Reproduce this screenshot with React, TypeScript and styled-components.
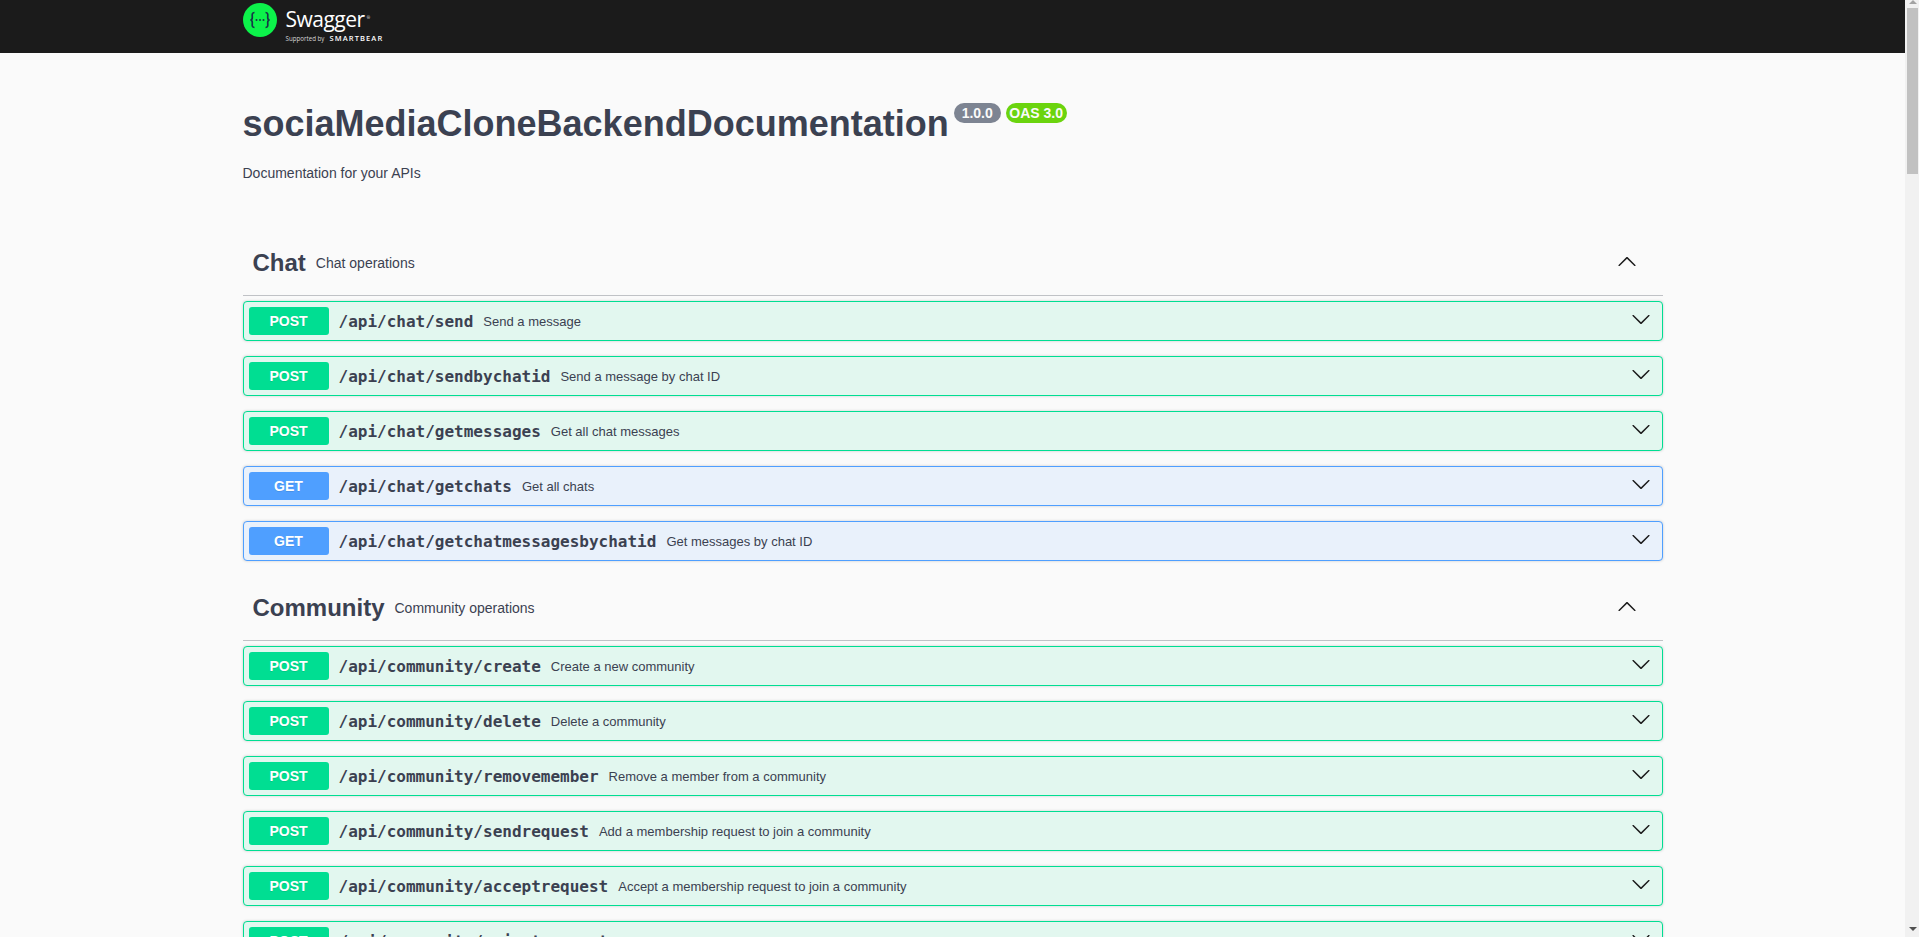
import React from "react";
import styled, { createGlobalStyle } from "styled-components";

const GlobalStyle = createGlobalStyle`
  body {
    margin: 0;
    background: #fafafa;
    font-family: "Liberation Sans", Arial, sans-serif;
    color: #3b4151;
  }
`;

const Shell = styled.div`
  display: flex;
  height: 100vh;
  overflow: hidden;
`;

const Page = styled.div`
  flex: 1;
  min-width: 0;
`;

const ScrollTrack = styled.div`
  flex: none;
  display: flex;
  flex-direction: column;
  width: 14px;
  background: #f1f1f1;
  padding: 0 1px 0 2px;
  box-sizing: border-box;
`;

const ScrollUp = styled.div`
  width: 0;
  height: 0;
  margin: 0 auto 4px;
  border-left: 4px solid transparent;
  border-right: 4px solid transparent;
  border-bottom: 4px solid #a3a3a3;
`;

const ScrollDown = styled.div`
  width: 0;
  height: 0;
  margin: auto auto 6px;
  border-left: 4px solid transparent;
  border-right: 4px solid transparent;
  border-top: 4px solid #505050;
`;

const ScrollThumb = styled.div`
  height: 166px;
  background: #c1c1c1;
`;

const Topbar = styled.div`
  background: #1b1b1b;
  height: 53px;
`;

const Wrapper = styled.div`
  box-sizing: border-box;
  max-width: 1460px;
  margin: 0 auto;
  padding: 0 20px;
`;

const LogoLink = styled.a`
  display: flex;
  align-items: flex-start;
  gap: 9px;
  padding-top: 3px;
  color: #fff;
`;

const LogoText = styled.div`
  display: flex;
  flex-direction: column;
  font-family: "Open Sans", sans-serif;
`;

const LogoName = styled.span`
  font-size: 21px;
  font-weight: 400;
  line-height: 26px;
  margin-top: 3px;
  letter-spacing: -0.5px;
  color: #fff;
`;

const LogoMark = styled.sup`
  font-size: 4px;
  line-height: 4px;
  margin-left: 2px;
`;

const LogoSub = styled.span`
  font-size: 6.200px;
  line-height: 9px;
  margin-top: 2px;
  color: #d8d8d8;
`;

const BearName = styled.b`
  font-size: 7.500px;
  font-weight: 600;
  letter-spacing: 1.100px;
  margin-left: 5px;
  color: #fff;
`;

const Info = styled.div`
  margin: 50px 0 56px;
`;

const TitleRow = styled.div`
  display: flex;
  align-items: flex-start;
`;

const Title = styled.h2`
  margin: 0;
  font-size: 36px;
  line-height: 42px;
  font-weight: 700;
  color: #3b4151;
`;

const Badge = styled.span<{ $bg: string; $pad: number }>`
  background: ${(p) => p.$bg};
  color: #fafafa;
  font-size: 14px;
  font-weight: 700;
  line-height: 16px;
  padding: 2px ${(p) => p.$pad}px;
  border-radius: 57px;
  margin-left: 5px;
`;

const Description = styled.p`
  margin: 20px 0 0;
  font-size: 14px;
  line-height: 17px;
  color: #3b4151;
`;

const Section = styled.section`
  margin-bottom: 22px;
`;

const TagHeader = styled.h3`
  display: flex;
  align-items: center;
  margin: 0 0 5px;
  padding: 10px 26px 17px 10px;
  height: 58px;
  box-sizing: border-box;
  border-bottom: 1px solid rgba(59, 65, 81, 0.3);
  font-size: 24px;
  font-weight: 700;
  color: #3b4151;
`;

const TagNote = styled.small`
  flex: 1;
  padding: 0 10px;
  font-size: 14px;
  font-weight: 400;
`;

const Opblock = styled.div<{ $get: boolean }>`
  display: flex;
  align-items: center;
  padding: 5px;
  margin: 0 0 15px;
  height: 40px;
  box-sizing: border-box;
  border: 1px solid ${(p) => (p.$get ? "#4f9fff" : "#00de92")};
  border-radius: 4px;
  background: ${(p) => (p.$get ? "#e9f1fb" : "#e2f7ef")};
  box-shadow: 0 0 3px rgba(0, 0, 0, 0.19);
`;

const Method = styled.span<{ $get: boolean }>`
  width: 80px;
  padding: 6px 0;
  border-radius: 3px;
  background: ${(p) => (p.$get ? "#4f9fff" : "#00de92")};
  color: #fff;
  font-size: 14px;
  line-height: 16px;
  font-weight: 700;
  text-align: center;
  text-shadow: 0 1px 0 rgba(0, 0, 0, 0.1);
`;

const Path = styled.span`
  padding: 0 10px;
  font-family: "DejaVu Sans Mono", monospace;
  font-size: 16px;
  font-weight: 700;
  color: #3b4151;
`;

const Summary = styled.span`
  flex: 1;
  font-size: 13px;
  color: #3b4151;
`;

const Arrow = styled.svg`
  width: 20px;
  height: 20px;
  margin: 0 6px 4px 0;
  fill: #1b1b1b;
`;

const TagArrow = styled(Arrow)`
  margin: 0 0 4px;
`;

type Op = { method: "POST" | "GET"; path: string; summary: string };

const sections: { name: string; note: string; ops: Op[] }[] = [
  {
    name: "Chat",
    note: "Chat operations",
    ops: [
      { method: "POST", path: "/api/chat/send", summary: "Send a message" },
      { method: "POST", path: "/api/chat/sendbychatid", summary: "Send a message by chat ID" },
      { method: "POST", path: "/api/chat/getmessages", summary: "Get all chat messages" },
      { method: "GET", path: "/api/chat/getchats", summary: "Get all chats" },
      { method: "GET", path: "/api/chat/getchatmessagesbychatid", summary: "Get messages by chat ID" },
    ],
  },
  {
    name: "Community",
    note: "Community operations",
    ops: [
      { method: "POST", path: "/api/community/create", summary: "Create a new community" },
      { method: "POST", path: "/api/community/delete", summary: "Delete a community" },
      { method: "POST", path: "/api/community/removemember", summary: "Remove a member from a community" },
      { method: "POST", path: "/api/community/sendrequest", summary: "Add a membership request to join a community" },
      { method: "POST", path: "/api/community/acceptrequest", summary: "Accept a membership request to join a community" },
      { method: "POST", path: "/api/community/rejectrequest", summary: "Reject a membership request" },
    ],
  },
];

const App = () => {
  return (
    <Shell>
      <GlobalStyle />
      <Page>
        <Topbar>
          <Wrapper>
            <LogoLink>
              <svg width="34" height="34" viewBox="0 0 34 34">
                <circle cx="17" cy="17" r="17" fill="#0cf24a" />
                <path
                  d="M11.500 9.500c-3 0-2.200 3-2.200 5 0 1.600-.8 2.500-2 2.500 1.200 0 2 .9 2 2.500 0 2-.8 5 2.200 5M22.500 9.500c3 0 2.200 3 2.200 5 0 1.600.8 2.500 2 2.500-1.200 0-2 .9-2 2.500 0 2 .8 5-2.200 5"
                  fill="none"
                  stroke="#173647"
                  strokeWidth="1.700"
                />
                <circle cx="13.500" cy="17" r="1" fill="#173647" />
                <circle cx="17" cy="17" r="1" fill="#173647" />
                <circle cx="20.500" cy="17" r="1" fill="#173647" />
              </svg>
              <LogoText>
                <LogoName>
                  Swagger<LogoMark>®</LogoMark>
                </LogoName>
                <LogoSub>
                  Supported by<BearName>SMARTBEAR</BearName>
                </LogoSub>
              </LogoText>
            </LogoLink>
          </Wrapper>
        </Topbar>
        <Wrapper>
          <Info>
            <TitleRow>
              <Title>sociaMediaCloneBackendDocumentation</Title>
              <Badge $bg="#7d8492" $pad={8}>1.0.0</Badge>
              <Badge $bg="#6bd40e" $pad={3.500}>OAS 3.0</Badge>
            </TitleRow>
            <Description>Documentation for your APIs</Description>
          </Info>
          {sections.map((section) => (
            <Section key={section.name}>
              <TagHeader>
                {section.name}
                <TagNote>{section.note}</TagNote>
                <TagArrow viewBox="0 0 20 20">
                  <path d="M 17.418 14.908 C 17.69 15.176 18.127 15.176 18.397 14.908 C 18.667 14.64 18.668 14.207 18.397 13.939 L 10.489 6.109 C 10.219 5.841 9.782 5.841 9.51 6.109 L 1.602 13.939 C 1.332 14.207 1.332 14.64 1.602 14.908 C 1.873 15.176 2.311 15.176 2.581 14.908 L 10 7.767 L 17.418 14.908 Z" />
                </TagArrow>
              </TagHeader>
              {section.ops.map((op) => (
                <Opblock key={op.path} $get={op.method === "GET"}>
                  <Method $get={op.method === "GET"}>{op.method}</Method>
                  <Path>{op.path}</Path>
                  <Summary>{op.summary}</Summary>
                  <Arrow viewBox="0 0 20 20">
                    <path d="M 17.418 6.109 C 17.69 5.841 18.127 5.841 18.397 6.109 C 18.667 6.377 18.668 6.81 18.397 7.078 L 10.489 14.908 C 10.219 15.176 9.782 15.176 9.51 14.908 L 1.602 7.078 C 1.332 6.81 1.332 6.377 1.602 6.109 C 1.873 5.841 2.311 5.841 2.581 6.109 L 10 13.25 L 17.418 6.109 Z" />
                  </Arrow>
                </Opblock>
              ))}
            </Section>
          ))}
        </Wrapper>
      </Page>
      <ScrollTrack>
        <ScrollUp />
        <ScrollThumb />
        <ScrollDown />
      </ScrollTrack>
    </Shell>
  );
};

export default App;
